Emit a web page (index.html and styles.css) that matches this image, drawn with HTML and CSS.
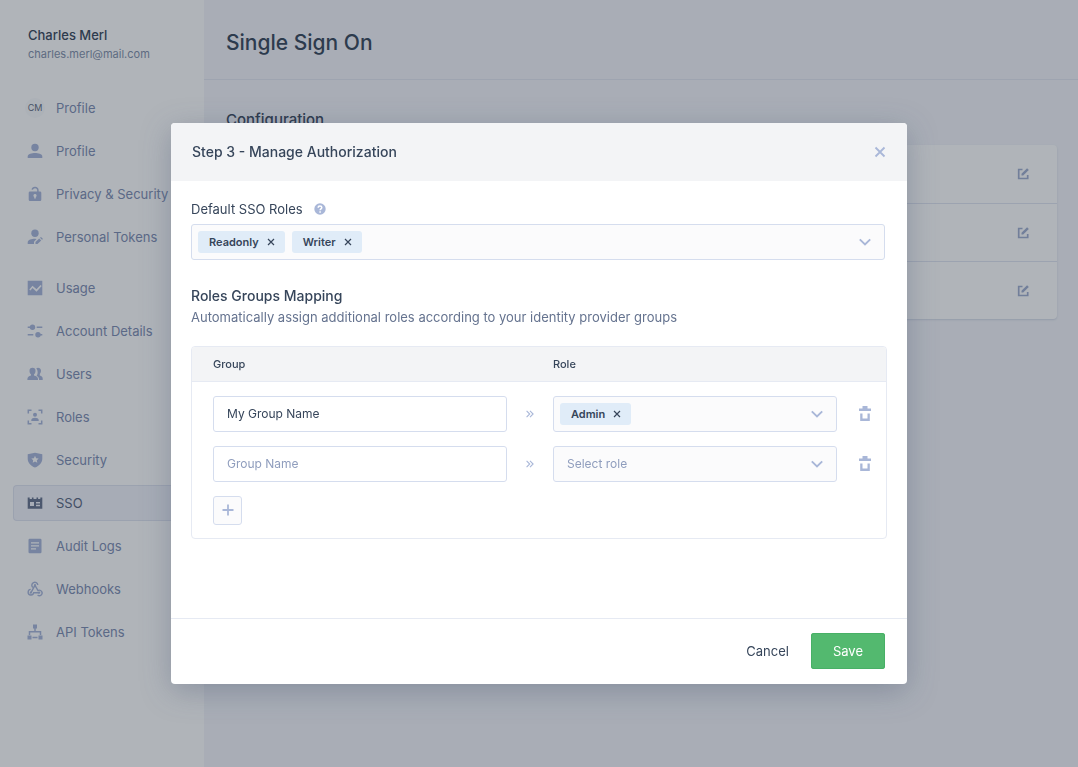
FILE: index.html
```html
<!DOCTYPE html>
<html lang="en">
<head>
<meta charset="utf-8">
<meta name="viewport" content="width=device-width, initial-scale=1">
<title>Single Sign On</title>
<link rel="stylesheet" href="styles.css">
</head>
<body>
<svg class="sprite" aria-hidden="true">
  <symbol id="chevron" viewBox="0 0 12 12"><path d="M.8 3.300L6 8.500l5.200-5.200" fill="none" stroke="currentColor" stroke-width="1.900"/></symbol>
  <symbol id="cross" viewBox="0 0 12 12"><path d="M1.500 1.500l9 9M10.500 1.500l-9 9" fill="none" stroke="currentColor" stroke-width="1.800"/></symbol>
  <symbol id="double" viewBox="0 0 8 8"><path d="M.6.8L3.700 4 .6 7.200M4 .8L7.100 4 4 7.200" fill="none" stroke="currentColor" stroke-width="1.100"/></symbol>
  <symbol id="trash" viewBox="0 0 14 16"><path d="M4.500 0h5v2.500H13V5H1V2.500h3.500zM2.200 7.500h2.300v5h5v-5h2.300V15H2.200z" fill="currentColor"/></symbol>
  <symbol id="edit" viewBox="0 0 12 12"><path d="M5.500 1.500H1.700v9h9V7" fill="none" stroke="currentColor" stroke-width="1.700"/><path d="M4.500 5.800L10.100.2l1.700 1.700L6.200 7.500H4.500z" fill="currentColor"/></symbol>
</svg>
<div class="app">
  <aside class="sidebar">
    <div class="user">
      <div class="user-name">Charles Merl</div>
      <div class="user-mail">charles.merl@mail.com</div>
    </div>
    <nav class="nav">
      <div class="nav-group">
        <a class="nav-item" href="#"><span class="avatar">CM</span>Profile</a>
        <a class="nav-item" href="#"><svg class="nav-icon" viewBox="0 0 16 16"><circle cx="8" cy="4.500" r="3.700"/><path d="M.7 15v-1.600C.7 11 5 10 8 10s7.300 1 7.300 3.400V15z"/></svg>Profile</a>
        <a class="nav-item" href="#"><svg class="nav-icon" viewBox="0 0 16 16"><path fill-rule="evenodd" d="M3 5.500h10a1.300 1.300 0 0 1 1.300 1.300v7A1.300 1.300 0 0 1 13 15.100H3a1.300 1.300 0 0 1-1.300-1.300v-7A1.300 1.300 0 0 1 3 5.500zM8 8a1.600 1.600 0 0 0-.8 3v1.600h1.600V11A1.600 1.600 0 0 0 8 8z"/><path d="M5.200 3.700a2.900 2.900 0 0 1 5.700.3v2" fill="none" stroke="currentColor" stroke-width="1.500"/></svg>Privacy &amp; Security</a>
        <a class="nav-item" href="#"><svg class="nav-icon" viewBox="0 0 16 16"><circle cx="8" cy="4.200" r="3.700"/><path d="M.7 15v-1.600c0-2.500 4-3.600 7.300-3.600l1.500.1L7 12.800V15zM8.500 15v-2l3.700-3.500 2 2L10.500 15z"/><path d="M13 8.800l1-.9 2 2-1 .9z"/></svg>Personal Tokens</a>
      </div>
      <div class="nav-group">
        <a class="nav-item" href="#"><svg class="nav-icon" viewBox="0 0 16 16"><path fill-rule="evenodd" d="M.7.7h14.600v14.600H.7zM2.300 9.400l3.200-3.600 4 3.500 4-4.400 1.200 1.200-5.200 5.600-4-3.600-2 2.500z"/></svg>Usage</a>
        <a class="nav-item" href="#"><svg class="nav-icon" viewBox="0 0 16 16"><circle cx="5.500" cy="4.200" r="2.700"/><circle cx="11" cy="11.700" r="2.700"/><path d="M.7 3.400h3v1.600h-3zM9.700 3.400h5.600v1.600H9.700zM.7 10.900h5.600v1.600H.7zM13 10.900h2.300v1.600H13z"/></svg>Account Details</a>
        <a class="nav-item" href="#"><svg class="nav-icon" viewBox="0 0 16 16"><path d="M9.300 2.300a3 3 0 0 1 4.700 2.300c0 1.600-.5 2.700-1.200 3.400v1.400c2 .7 2.900 1.400 2.900 3.100v1.500h-3.600c0-2.200-1-3.400-2.500-4.200 1.500-1.800 1.500-5-.3-7.500z"/><path d="M5.500 1.700a3 3 0 0 1 3 3.100c0 1.700-.6 3-1.500 3.700v1.100c2.300.8 4 1.500 4 3.400v1H.4v-1c0-1.900 1.500-2.600 3.600-3.400V8.500C3.100 7.800 2.500 6.500 2.500 4.800a3 3 0 0 1 3-3.100z"/></svg>Users</a>
        <a class="nav-item" href="#"><svg class="nav-icon" viewBox="0 0 16 16"><path d="M1.300 4.500V1.300h3.200M11.500 1.300h3.200v3.200M14.700 11.500v3.200h-3.200M4.500 14.700H1.300v-3.200" fill="none" stroke="currentColor" stroke-width="1.500"/><circle cx="8" cy="5.700" r="2"/><path d="M4.300 12v-1c0-1.500 2-2.200 3.700-2.200s3.700.7 3.700 2.200v1z"/></svg>Roles</a>
        <a class="nav-item" href="#"><svg class="nav-icon" viewBox="0 0 16 16"><path fill-rule="evenodd" d="M8 .7l7.300 1.500v4.500c0 4-3 7.200-7.300 8.800C3.700 13.900.7 10.700.7 6.700V2.200zM8 3.800L6.900 6.200l-2.600.3 1.900 1.700-.5 2.600L8 9.500l2.300 1.300-.5-2.600 1.900-1.700-2.600-.3z"/></svg>Security</a>
        <a class="nav-item active" href="#" aria-current="page"><svg class="nav-icon" viewBox="0 0 16 16"><path fill-rule="evenodd" d="M.7 2.500h2V4h2.200V2.500h1.600V4h3V2.500h1.600V4h2.200V2.500h2v11.200H.7zM3 7v4h4V7zM9 7v1.500h4V7zM9 9.700v1.500h4V9.700z"/></svg>SSO</a>
        <a class="nav-item" href="#"><svg class="nav-icon" viewBox="0 0 16 16"><path fill-rule="evenodd" d="M2.700.7h10.600a1.200 1.200 0 0 1 1.200 1.200v12.200a1.200 1.200 0 0 1-1.200 1.200H2.700a1.200 1.200 0 0 1-1.200-1.200V1.900A1.200 1.200 0 0 1 2.700.7zM4 4.300v1.200h8V4.300zM4 7.200v1.200h8V7.200zM4 10.200v1.200h5v-1.200z"/></svg>Audit Logs</a>
        <a class="nav-item" href="#"><svg class="nav-icon" viewBox="0 0 16 16"><g fill="none" stroke="currentColor" stroke-width="1.400"><path d="M5.700 6.400A3 3 0 1 1 10.800 4M4 11.700L7.900 4.300M8 4.300l3 5.300a2.700 2.700 0 1 1-.4 4.400M12 11.700H6.700a2.800 2.800 0 1 1-3-3.300"/></g><circle cx="8" cy="4.200" r="1.100"/><circle cx="3.800" cy="11.700" r="1.100"/><circle cx="12.200" cy="11.700" r="1.100"/></svg>Webhooks</a>
        <a class="nav-item" href="#"><svg class="nav-icon" viewBox="0 0 16 16"><path d="M6 .5h4v4H6zM.5 11.500h4v4h-4zM11.500 11.500h4v4h-4zM5.500 12.800h5v1.400h-5z"/><path d="M8 4v3.300M2.500 11V7.700h11V11" fill="none" stroke="currentColor" stroke-width="1.500"/></svg>API Tokens</a>
      </div>
    </nav>
  </aside>
  <main class="main">
    <header class="page-header"><h1 class="page-title">Single Sign On</h1></header>
    <section class="content">
      <h2 class="content-title">Configuration</h2>
      <ul class="card">
        <li class="card-row"><button class="icon-button edit" type="button" aria-label="Edit"><svg class="icon"><use href="#edit"/></svg></button></li>
        <li class="card-row"><button class="icon-button edit" type="button" aria-label="Edit"><svg class="icon"><use href="#edit"/></svg></button></li>
        <li class="card-row"><button class="icon-button edit" type="button" aria-label="Edit"><svg class="icon"><use href="#edit"/></svg></button></li>
      </ul>
    </section>
  </main>
</div>

<div class="overlay">
  <form class="dialog" role="dialog" aria-modal="true" aria-labelledby="dialog-title">
    <header class="dialog-header">
      <h2 class="dialog-title" id="dialog-title">Step 3 - Manage Authorization</h2>
      <button class="icon-button" type="button" aria-label="Close"><svg class="icon"><use href="#cross"/></svg></button>
    </header>
    <div class="dialog-body">
      <div class="field">
        <div class="field-head">
          <label class="field-label" for="default-roles">Default SSO Roles</label>
          <svg class="help" viewBox="0 0 12 12" role="img" aria-label="Help"><circle cx="6" cy="6" r="5.700"/><path d="M4.200 4.700c0-2.300 3.600-2.200 3.600-.1C7.800 5.900 6.100 6 6.100 7.300M6.100 8.200v1.500" fill="none" stroke="#fff" stroke-width="1.500"/></svg>
        </div>
        <div class="picker">
          <span class="chip">Readonly<button class="chip-remove" type="button" aria-label="Remove Readonly"><svg class="icon-small"><use href="#cross"/></svg></button></span>
          <span class="chip">Writer<button class="chip-remove" type="button" aria-label="Remove Writer"><svg class="icon-small"><use href="#cross"/></svg></button></span>
          <select class="picker-select" id="default-roles"><option></option></select>
          <svg class="icon"><use href="#chevron"/></svg>
        </div>
      </div>
      <section class="mapping">
        <h3 class="mapping-title">Roles Groups Mapping</h3>
        <p class="mapping-text">Automatically assign additional roles according to your identity provider groups</p>
        <div class="table-frame">
          <table class="table">
            <thead>
              <tr><th class="col-group">Group</th><th class="col-arrow"></th><th class="col-role">Role</th><th class="col-action"></th></tr>
            </thead>
            <tbody>
              <tr>
                <td class="col-group"><input class="input" type="text" value="My Group Name" aria-label="Group"></td>
                <td class="col-arrow"><svg class="icon-small"><use href="#double"/></svg></td>
                <td class="col-role">
                  <div class="picker">
                    <span class="chip">Admin<button class="chip-remove" type="button" aria-label="Remove Admin"><svg class="icon-small"><use href="#cross"/></svg></button></span>
                    <select class="picker-select" aria-label="Role"><option></option></select>
                    <svg class="icon"><use href="#chevron"/></svg>
                  </div>
                </td>
                <td class="col-action"><button class="icon-button" type="button" aria-label="Delete"><svg class="icon-trash"><use href="#trash"/></svg></button></td>
              </tr>
              <tr>
                <td class="col-group"><input class="input" type="text" placeholder="Group Name" aria-label="Group"></td>
                <td class="col-arrow"><svg class="icon-small"><use href="#double"/></svg></td>
                <td class="col-role">
                  <div class="picker">
                    <select class="picker-select empty" aria-label="Role"><option>Select role</option></select>
                    <svg class="icon"><use href="#chevron"/></svg>
                  </div>
                </td>
                <td class="col-action"><button class="icon-button" type="button" aria-label="Delete"><svg class="icon-trash"><use href="#trash"/></svg></button></td>
              </tr>
              <tr>
                <td class="col-group" colspan="4"><button class="add" type="button" aria-label="Add mapping"><svg class="icon" viewBox="0 0 12 12"><path d="M6 .5v11M.5 6h11" stroke="currentColor" stroke-width="1.800"/></svg></button></td>
              </tr>
            </tbody>
          </table>
        </div>
      </section>
    </div>
    <footer class="dialog-footer">
      <button class="button" type="button">Cancel</button>
      <button class="button primary" type="submit">Save</button>
    </footer>
  </form>
</div>
</body>
</html>
```
FILE: styles.css
```css
* { box-sizing: border-box; }

body {
  margin: 0;
  color: #36455a;
  font: 400 13px/18px Inter, "Liberation Sans", sans-serif;
}

button, input, select { font: inherit; color: inherit; }
button { cursor: pointer; }
h1, h2, h3, p, ul { margin: 0; padding: 0; font-weight: 500; }
svg { display: block; fill: currentColor; }

.sprite { position: absolute; width: 0; height: 0; }
.icon { width: 12px; height: 12px; flex: none; }
.icon-small { width: 8px; height: 8px; }
.icon-trash { width: 14px; height: 16px; }

.icon-button {
  display: flex;
  padding: 0;
  border: 0;
  background: none;
  color: #a9b7d8;
}
.icon-button.edit { color: #a0aed0; }

/* Page */
.app { display: flex; min-height: 100vh; background: #f4f5fa; }

.sidebar { flex: none; width: 204px; padding: 25px 0 0 13px; background: #fff; }
.user { padding-left: 15px; }
.user-name { font-weight: 500; line-height: 20px; }
.user-mail { color: #8290aa; font-size: 11px; }

.nav { display: flex; flex-direction: column; gap: 15px; margin-top: 27px; }
.nav-group { display: flex; flex-direction: column; gap: 7px; }
.nav-item {
  display: flex;
  align-items: center;
  gap: 13px;
  height: 36px;
  padding-left: 13px;
  border: 1px solid transparent;
  border-right: 0;
  border-radius: 4px 0 0 4px;
  color: #7d8cb2;
  text-decoration: none;
  white-space: nowrap;
}
.nav-icon { flex: none; width: 16px; height: 16px; color: #a8b6da; }
.avatar {
  display: flex;
  align-items: center;
  justify-content: center;
  width: 20px;
  height: 20px;
  margin: 0 -2px;
  border-radius: 50%;
  background: #f9fafc;
  color: #5f6b80;
  font-size: 9px;
}
.nav-item.active { background: #f1f3fa; border-color: #dfe3f0; color: #586580; }
.nav-item.active .nav-icon { color: #64718c; }

.main { flex: 1; }
.page-header { padding: 27px 22px 20px; border-bottom: 1px solid #e3e7f1; }
.page-title { font-size: 21px; line-height: 32px; }
.content { padding: 30px 21px 0 22px; }
.content-title { font-size: 15px; line-height: 20px; }
.card {
  margin-top: 15px;
  border-radius: 4px;
  background: #fff;
  box-shadow: 0 1px 2px #d3d8e6;
  list-style: none;
}
.card-row {
  display: flex;
  align-items: center;
  justify-content: flex-end;
  height: 58px;
  padding-right: 28px;
}
.card-row + .card-row { border-top: 1px solid #e1e5f1; }

/* Dialog */
.overlay {
  position: fixed;
  inset: 0;
  display: flex;
  align-items: flex-start;
  justify-content: center;
  padding: 123px 20px 20px;
  overflow: auto;
  background: rgba(29, 41, 55, 0.35);
}
.dialog {
  width: 100%;
  max-width: 736px;
  border-radius: 4px;
  background: #fff;
  box-shadow: 0 7px 30px rgba(70, 82, 115, 0.35);
}
.dialog-header {
  display: flex;
  align-items: center;
  justify-content: space-between;
  padding: 19px 21px;
  border-radius: 4px 4px 0 0;
  background: #f3f4f6;
}
.dialog-title { font-size: 14px; line-height: 20px; }
.dialog-body { min-height: 437px; padding: 19px 20px 20px; }

.field { margin-right: 2px; }
.field-head { display: flex; align-items: center; gap: 11px; margin-bottom: 6px; }
.help { width: 12px; height: 12px; color: #a9b7d8; }

.picker {
  display: flex;
  align-items: center;
  gap: 7px;
  height: 36px;
  padding: 0 13px 0 6px;
  border: 1px solid #d5ddee;
  border-radius: 3px;
  background: #fbfbfc;
  color: #a9b7d8;
}
.picker-select {
  flex: 1;
  min-width: 0;
  padding: 0;
  border: 0;
  background: none;
  appearance: none;
}
.picker-select.empty { padding-left: 7px; color: #8f9dbd; font-size: 12px; }
.chip {
  display: flex;
  align-items: center;
  gap: 8px;
  height: 22px;
  padding: 0 10px 0 11px;
  border-radius: 3px;
  background: #e0ecf8;
  color: #36455a;
  font-size: 11px;
  font-weight: 600;
}
.chip-remove { padding: 0; border: 0; background: none; }

.mapping { margin-top: 26px; }
.mapping-title { font-size: 14px; line-height: 20px; }
.mapping-text { margin-top: 2px; color: #65738f; font-weight: 400; }

.table-frame {
  margin-top: 20px;
  border: 1px solid #e6eaf3;
  border-radius: 4px;
  overflow: hidden;
}
.table { width: 100%; border-collapse: collapse; table-layout: fixed; }
.table th {
  height: 34px;
  padding: 0;
  border-bottom: 1px solid #e6eaf3;
  background: #f3f4f6;
  font-size: 11px;
  font-weight: 500;
  text-align: left;
}
.table td { padding: 7px 0; }
.table tbody tr:first-child td { padding-top: 14px; }
.table tbody tr:last-child td { padding-bottom: 13px; }
.table .col-group { padding-left: 21px; }
.col-arrow { width: 46px; color: #a9b7d8; }
.col-role { width: 284px; }
.col-action { width: 49px; }
.col-arrow svg { margin: 0 auto; }
.col-action .icon-button { margin-left: 21px; }

.input {
  display: block;
  width: 100%;
  height: 36px;
  padding: 0 13px;
  border: 1px solid #d5ddee;
  border-radius: 3px;
  background: #fff;
  font-size: 12px;
}
.input::placeholder { color: #8f9dbd; opacity: 1; }

.add {
  display: flex;
  align-items: center;
  justify-content: center;
  width: 29px;
  height: 29px;
  padding: 0;
  border: 1px solid #d5ddee;
  border-radius: 3px;
  background: #fbfbfc;
  color: #a9b7d8;
}

.dialog-footer {
  display: flex;
  justify-content: flex-end;
  padding: 14px 22px 15px 20px;
  border-top: 1px solid #e6eaf3;
}
.button {
  height: 36px;
  padding: 0 22px;
  border: 0;
  border-radius: 3px;
  background: none;
}
.button.primary { background: #53b96f; box-shadow: inset 0 0 0 1px #48b066; color: #fff; }
```
